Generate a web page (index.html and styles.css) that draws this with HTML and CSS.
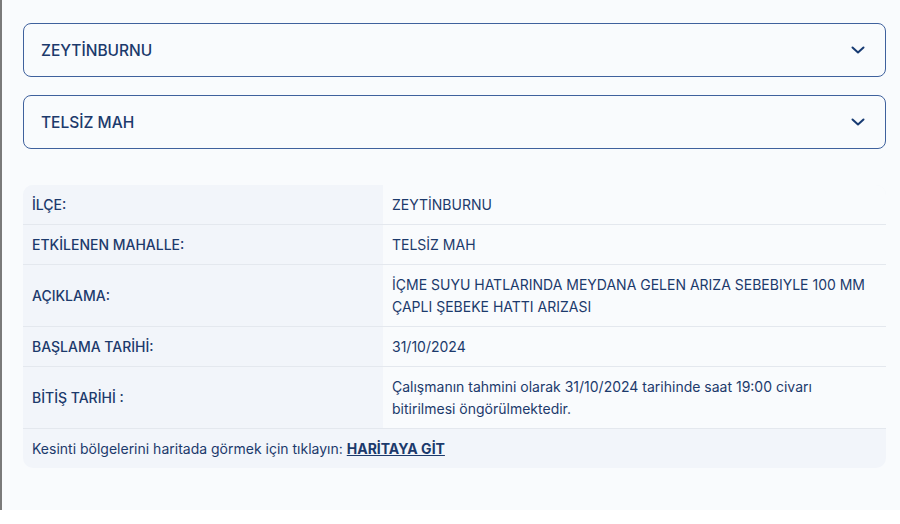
FILE: index.html
```html
<!DOCTYPE html>
<html lang="tr">
<head>
    <meta charset="UTF-8">
    <meta name="viewport" content="width=device-width, initial-scale=1.0">
    <title>Su Kesintileri</title>
    <link rel="stylesheet" href="styles.css">
</head>
<body>
    <div class="page">
        <div class="select-box">
            <span>ZEYTİNBURNU</span>
            <svg class="chevron" width="14" height="8" viewBox="0 0 14 8"><path d="M1.5 1.5l5.5 5 5.5-5" fill="none" stroke="#173a72" stroke-width="2" stroke-linecap="round" stroke-linejoin="round"/></svg>
        </div>

        <div class="select-box">
            <span>TELSİZ MAH</span>
            <svg class="chevron" width="14" height="8" viewBox="0 0 14 8"><path d="M1.5 1.5l5.5 5 5.5-5" fill="none" stroke="#173a72" stroke-width="2" stroke-linecap="round" stroke-linejoin="round"/></svg>
        </div>

        <div class="info-card">
            <table class="info-table">
                <tr>
                    <th>İLÇE:</th>
                    <td>ZEYTİNBURNU</td>
                </tr>
                <tr>
                    <th>ETKİLENEN MAHALLE:</th>
                    <td>TELSİZ MAH</td>
                </tr>
                <tr>
                    <th>AÇIKLAMA:</th>
                    <td>İÇME SUYU HATLARINDA MEYDANA GELEN ARIZA SEBEBIYLE 100 MM ÇAPLI ŞEBEKE HATTI ARIZASI</td>
                </tr>
                <tr>
                    <th>BAŞLAMA TARİHİ:</th>
                    <td>31/10/2024</td>
                </tr>
                <tr>
                    <th>BİTİŞ TARİHİ :</th>
                    <td>Çalışmanın tahmini olarak 31/10/2024 tarihinde saat 19:00 civarı bitirilmesi öngörülmektedir.</td>
                </tr>
            </table>
            <p class="map-link">Kesinti bölgelerini haritada görmek için tıklayın: <a href="#">HARİTAYA GİT</a></p>
        </div>
    </div>
</body>
</html>
```

FILE: styles.css
```css
/* Page */
body {
    margin: 0;
    background: #ffffff;
    font-family: 'Inter', sans-serif;
    color: #1c3a6c;
}

.page {
    height: 487px;
    padding: 23px 14px 0 21px;
    border-left: 2px solid #7a7a7a;
    background: #f9fbfd;
}

/* Dropdowns */
.select-box {
    display: flex;
    align-items: center;
    justify-content: space-between;
    height: 52px;
    margin-bottom: 18px;
    padding: 0 20px 0 17px;
    border: 1px solid #3f619d;
    border-radius: 8px;
    font-size: 15.5px;
    font-weight: 500;
}

.chevron {
    display: block;
}

/* Info table */
.info-card {
    margin-top: 36px;
    border-radius: 10px;
    overflow: hidden;
    background: #f2f5fa;
}

.info-table {
    width: 100%;
    border-collapse: collapse;
    font-size: 14px;
    line-height: 22px;
}

.info-table tr {
    border-bottom: 1px solid #e4e8ee;
}

.info-table th {
    width: 342px;
    padding: 9px 9px 8px;
    text-align: left;
    font-weight: 500;
    background: #f2f5fa;
}

.info-table td {
    padding: 9px 9px 8px;
    background: #f9fbfd;
}

.map-link {
    margin: 0;
    padding: 9px 9px 8px;
    font-size: 14px;
    line-height: 22px;
}

.map-link a {
    color: #1c3a6c;
    font-weight: 700;
}
```
